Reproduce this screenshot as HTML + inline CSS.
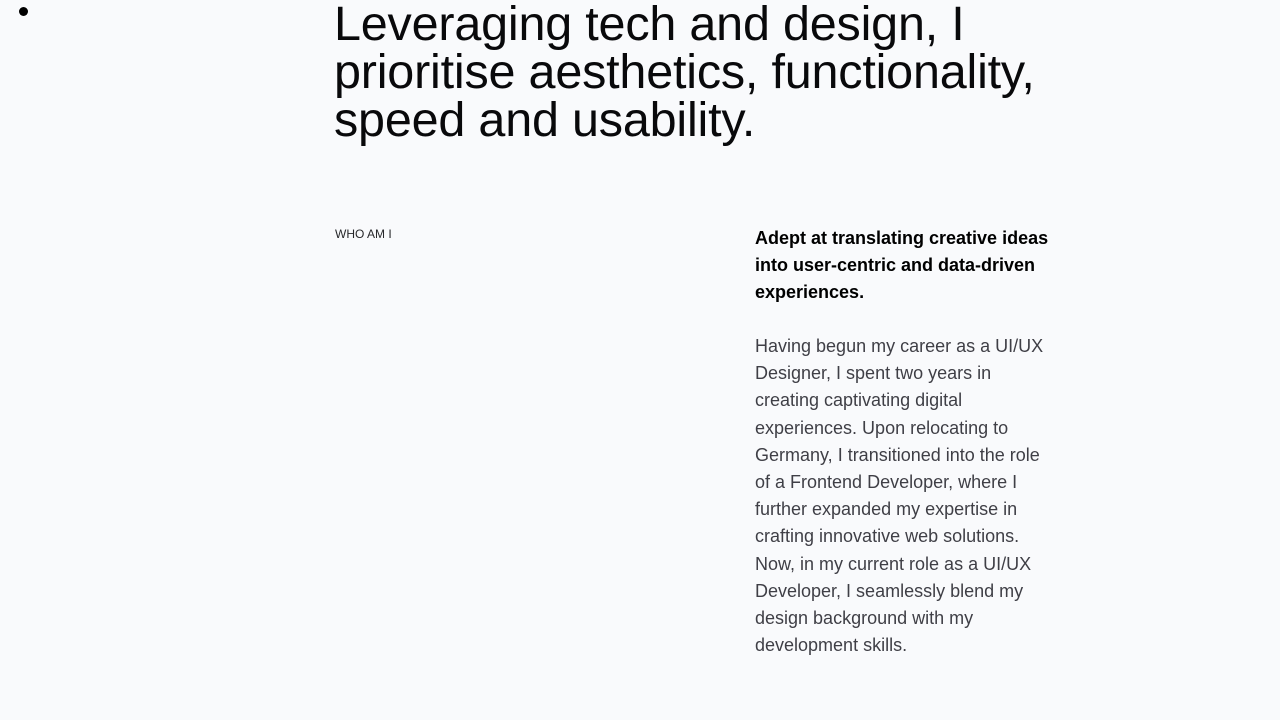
<!DOCTYPE html>
<html><head><style>
html,body{margin:0;padding:0;background:#f9fafc;width:1280px;height:720px;overflow:hidden;font-family:"Liberation Sans",Arial,sans-serif}
.dot{position:absolute;left:19px;top:7px;width:9px;height:9px;border-radius:50%;background:#000}
h1{position:absolute;left:334px;top:0px;margin:0;font-weight:400;font-size:48.5px;line-height:48px;color:#09090b;width:760px;letter-spacing:-0.2px}
.who{position:absolute;left:335px;top:227px;font-size:12px;color:#27272a;letter-spacing:0}
.right{position:absolute;left:755px;top:225px;width:300px}
.b{font-weight:700;font-size:18px;line-height:27px;color:#000;margin:0}
.p{font-size:18px;line-height:27.2px;color:#3f3f46;margin:27px 0 0}
</style></head><body>
<div class="dot"></div>
<h1>Leveraging tech and design, I prioritise aesthetics, functionality, speed and usability.</h1>
<div class="who">WHO AM I</div>
<div class="right">
<p class="b">Adept at translating creative ideas into user-centric and data-driven experiences.</p>
<p class="p">Having begun my career as a UI/UX Designer, I spent two years in creating captivating digital experiences. Upon relocating to Germany, I transitioned into the role of a Frontend Developer, where I further expanded my expertise in crafting innovative web solutions. Now, in my current role as a UI/UX Developer, I seamlessly blend my design background with my development skills.</p>
</div>
</body></html>
